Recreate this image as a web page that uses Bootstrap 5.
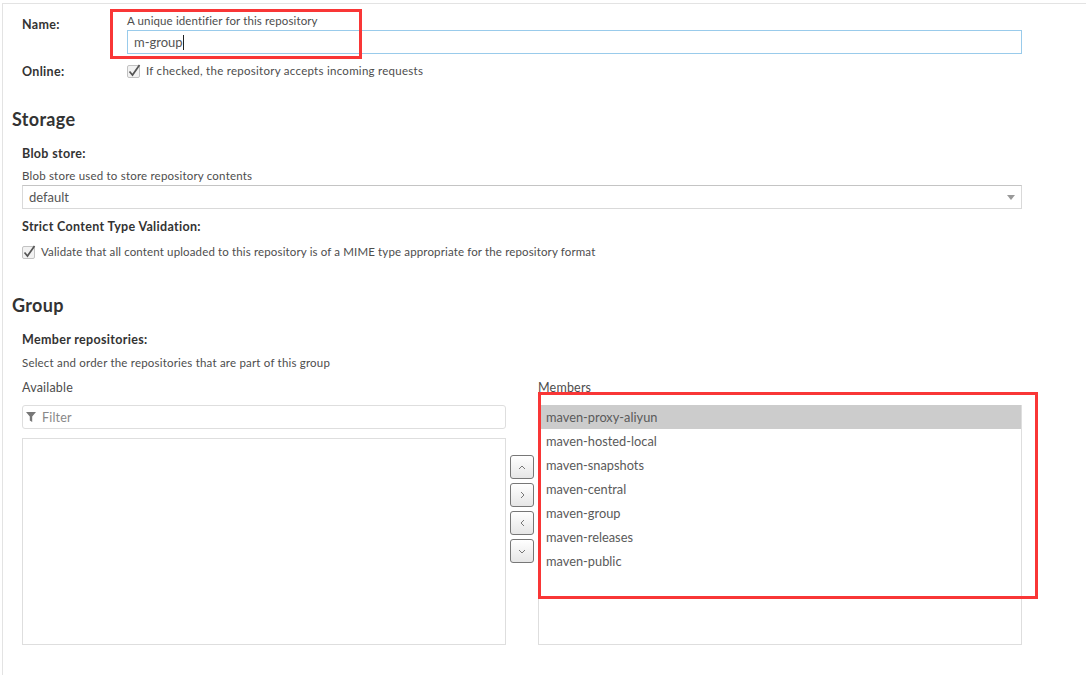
<!DOCTYPE html>
<html lang="en">
<head>
    <meta charset="UTF-8">
    <title>Repository settings</title>
    <link href="https://cdn.jsdelivr.net/npm/bootstrap@5.3.0/dist/css/bootstrap.min.css" rel="stylesheet">
    <style>
        html, body { height: 100%; overflow: hidden; }
        body { background: #fff; font-family: "Lato", "Liberation Sans", sans-serif; font-size: 12.5px; color: #4d4d4d; }
        .page-frame { position: relative; height: 675px; margin: 3px 0 0 2px; border-top: 1px solid #e3e3e3; border-left: 1px solid #e3e3e3; padding: 0 64px 0 9px; letter-spacing: .2px; }
        .field-wrap { padding-left: 10px; }
        .field-label { font-weight: 700; font-size: 12.5px; letter-spacing: .32px; color: #333; line-height: 16px; margin: 0; }
        .name-row { display: flex; padding-top: 10px; }
        .name-label { width: 105px; flex: none; padding-top: 3px; }
        .online-row .name-label { padding-top: 1px; }
        .help-text { line-height: 14px; font-size: 11.5px; color: #4d4d4d; }
        .help-name { letter-spacing: .12px; }
        .help-online { letter-spacing: .27px; }
        .help-strict { letter-spacing: .14px; }
        .name-input { height: 24px; margin-top: 2px; border: 1px solid #99cbeb; padding: 0 6px; font-size: 13px; line-height: 22px; letter-spacing: 0; color: #555; }
        .caret-bar { display: inline-block; width: 1px; height: 15px; background: #222; vertical-align: -3px; }
        .online-row { display: flex; align-items: center; margin-top: 9px; height: 16px; }
        .check-box { width: 13px; height: 13px; flex: none; margin-right: 6px; overflow: visible; }
        .section-title { font-size: 18px; font-weight: 700; color: #333; line-height: 20px; margin: 0; letter-spacing: .33px; }
        .select-box { height: 24px; border: 1px solid #d9d9d9; border-top-color: #c4c4c4; padding: 0 6px; font-size: 13px; line-height: 22px; position: relative; letter-spacing: 0; color: #555; }
        .select-arrow { position: absolute; right: 6px; top: 9px; width: 0; height: 0; border-left: 4px solid transparent; border-right: 4px solid transparent; border-top: 5px solid #999; }
        .picker-col { width: 484px; flex: none; }
        .column-head { line-height: 16px; }
        .head-available { margin-bottom: 9px; }
        .head-members { margin-bottom: 9px; }
        .filter-box { height: 24px; border: 1px solid #dedede; border-radius: 3px; padding: 0 3px; display: flex; align-items: center; gap: 6px; font-size: 12.5px; color: #888; }
        .filter-text { padding-top: 2px; }
        .list-box { border: 1px solid #dedede; height: 207px; margin-top: 9px; }
        .mover-col { width: 32px; flex: none; display: flex; flex-direction: column; align-items: center; gap: 4px; padding-top: 75px; }
        .mover-btn { width: 24px; height: 24px; padding: 0; border: 1px solid #777; border-radius: 3px; background: linear-gradient(#fff, #e6e6e6); display: flex; align-items: center; justify-content: center; }
        .member-list { border: 1px solid #dedede; border-top: 0; height: 240px; font-size: 12.8px; line-height: 24px; color: #5a5a5a; letter-spacing: 0; }
        .member-item { padding-left: 7px; height: 24px; }
        .member-item.is-active { background: #cccccc; }
        .red-mark { position: absolute; border: 3px solid #f93636; pointer-events: none; }
        .mark-name { left: 107px; top: 5px; width: 252px; height: 50px; }
        .mark-members { left: 535px; top: 388px; width: 500px; height: 207px; }
        .gap-storage { margin-top: 30px; }
        .gap-group { margin-top: 36px; }
        .gap-label { margin-top: 17px; }
        .gap-help { margin-top: 7px; }
        .gap-help-group { margin-top: 8px; }
        .gap-select { margin-top: 2px; }
        .gap-strict { margin-top: 10px; }
        .gap-check { margin-top: 10px; }
        .gap-columns { margin-top: 10px; }
    </style>
</head>
<body>
    <div class="page-frame">
        <div class="field-wrap">
            <div class="name-row">
                <p class="field-label name-label">Name:</p>
                <div class="flex-grow-1">
                    <div class="help-text help-name">A unique identifier for this repository</div>
                    <div class="name-input">m-group<span class="caret-bar"></span></div>
                </div>
            </div>
            <div class="online-row">
                <p class="field-label name-label">Online:</p>
                <svg class="check-box" viewBox="0 0 13 13"><rect x=".5" y=".5" width="12" height="12" rx="1.5" fill="#f2f2f2" stroke="#c2c2c2"/><path d="M2.5 6.5 5.5 10 12.5 0" fill="none" stroke="#555" stroke-width="1.7"/></svg>
                <span class="help-text help-online">If checked, the repository accepts incoming requests</span>
            </div>
        </div>

        <h2 class="section-title gap-storage">Storage</h2>
        <div class="field-wrap">
            <p class="field-label gap-label">Blob store:</p>
            <div class="help-text gap-help">Blob store used to store repository contents</div>
            <div class="select-box gap-select">default<span class="select-arrow"></span></div>
            <p class="field-label gap-strict">Strict Content Type Validation:</p>
            <div class="d-flex align-items-center gap-check">
                <svg class="check-box" viewBox="0 0 13 13"><rect x=".5" y=".5" width="12" height="12" rx="1.5" fill="#f2f2f2" stroke="#c2c2c2"/><path d="M2.5 6.5 5.5 10 12.5 0" fill="none" stroke="#555" stroke-width="1.7"/></svg>
                <span class="help-text help-strict">Validate that all content uploaded to this repository is of a MIME type appropriate for the repository format</span>
            </div>
        </div>

        <h2 class="section-title gap-group">Group</h2>
        <div class="field-wrap">
            <p class="field-label gap-label">Member repositories:</p>
            <div class="help-text gap-help-group">Select and order the repositories that are part of this group</div>
            <div class="d-flex gap-columns">
                <div class="picker-col">
                    <div class="column-head head-available">Available</div>
                    <div class="filter-box">
                        <svg width="10" height="10" viewBox="0 0 10 10"><path d="M0 0h10L6.2 4.6V10L3.8 8.4V4.6z" fill="#777"/></svg>
                        <span class="filter-text">Filter</span>
                    </div>
                    <div class="list-box"></div>
                </div>
                <div class="mover-col">
                    <button class="mover-btn" type="button"><svg width="8" height="5" viewBox="0 0 8 5"><path d="M1 4 4 1l3 3" fill="none" stroke="#777"/></svg></button>
                    <button class="mover-btn" type="button"><svg width="5" height="8" viewBox="0 0 5 8"><path d="M1 1l3 3-3 3" fill="none" stroke="#777"/></svg></button>
                    <button class="mover-btn" type="button"><svg width="5" height="8" viewBox="0 0 5 8"><path d="M4 1 1 4l3 3" fill="none" stroke="#777"/></svg></button>
                    <button class="mover-btn" type="button"><svg width="8" height="5" viewBox="0 0 8 5"><path d="M1 1l3 3 3-3" fill="none" stroke="#777"/></svg></button>
                </div>
                <div class="flex-grow-1">
                    <div class="column-head head-members">Members</div>
                    <div class="member-list">
                        <div class="member-item is-active">maven-proxy-aliyun</div>
                        <div class="member-item">maven-hosted-local</div>
                        <div class="member-item">maven-snapshots</div>
                        <div class="member-item">maven-central</div>
                        <div class="member-item">maven-group</div>
                        <div class="member-item">maven-releases</div>
                        <div class="member-item">maven-public</div>
                    </div>
                </div>
            </div>
        </div>
        <div class="red-mark mark-name"></div>
        <div class="red-mark mark-members"></div>
    </div>
    <script src="https://cdn.jsdelivr.net/npm/bootstrap@5.3.0/dist/js/bootstrap.bundle.min.js"></script>
</body>
</html>
